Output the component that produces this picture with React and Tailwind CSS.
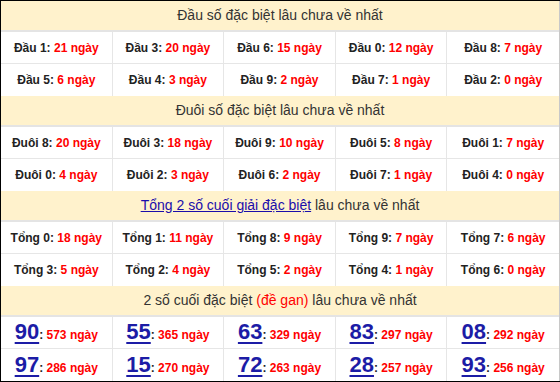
import React from "react";

const dau = [
	[["Đầu 1", 21], ["Đầu 3", 20], ["Đầu 6", 15], ["Đầu 0", 12], ["Đầu 8", 7]],
	[["Đầu 5", 6], ["Đầu 4", 3], ["Đầu 9", 2], ["Đầu 7", 1], ["Đầu 2", 0]],
];
const duoi = [
	[["Đuôi 8", 20], ["Đuôi 3", 18], ["Đuôi 9", 10], ["Đuôi 5", 8], ["Đuôi 1", 7]],
	[["Đuôi 0", 4], ["Đuôi 2", 3], ["Đuôi 6", 2], ["Đuôi 7", 1], ["Đuôi 4", 0]],
];
const tong = [
	[["Tổng 0", 18], ["Tổng 1", 11], ["Tổng 8", 9], ["Tổng 9", 7], ["Tổng 7", 6]],
	[["Tổng 3", 5], ["Tổng 2", 4], ["Tổng 5", 2], ["Tổng 4", 1], ["Tổng 6", 0]],
];
const gan = [
	[["90", 573], ["55", 365], ["63", 329], ["83", 297], ["08", 292]],
	[["97", 286], ["15", 270], ["72", 263], ["28", 257], ["93", 256]],
];

function Header({ children }) {
	return <div className="h-[31px] bg-[#fff2cc] border-b-2 border-[#e4e4e4] flex items-center justify-center text-[14px] text-[#333]">{children}</div>;
}

function Row({ cells, last, render }) {
	return (
		<div className={`grid grid-cols-5 ${last ? "h-[32px]" : "h-[32px] border-b border-[#e6e6e6]"}`}>
			{cells.map((c, i) => (
				<div key={i} className={`flex items-center justify-center ${i < 4 ? "border-r border-[#e6e6e6]" : ""}`}>
					{render(c)}
				</div>
			))}
		</div>
	);
}

const plain = ([label, n]) => (
	<span className="text-[12px] font-bold text-[#222]">
		{label}: <span className="text-[#ff0000]">{n} ngày</span>
	</span>
);

const big = ([num, n]) => (
	<span className="flex items-baseline text-[12px] font-bold text-[#222]">
		<span className="text-[22px] leading-none text-[#1c1ca6] underline decoration-2 underline-offset-[3px]">{num}</span>
		<span>:&nbsp;</span>
		<span className="text-[#ff0000]">{n} ngày</span>
	</span>
);

export default function App() {
	return (
		<div className="w-[560px] h-[382px] bg-white border-t border-l border-b border-black font-['Liberation_Sans',Arial,sans-serif]">
			<div className="border-r border-[#c8c8c8]">
				<Header>Đầu số đặc biệt lâu chưa về nhất</Header>
				<Row cells={dau[0]} render={plain} />
				<Row cells={dau[1]} render={plain} last />
				<Header>Đuôi số đặc biệt lâu chưa về nhất</Header>
				<Row cells={duoi[0]} render={plain} />
				<Row cells={duoi[1]} render={plain} last />
				<Header>
					<a href="#" className="text-[#1a0dab] underline">Tổng 2 số cuối giải đặc biệt</a>
					<span>&nbsp;lâu chưa về nhất</span>
				</Header>
				<Row cells={tong[0]} render={plain} />
				<Row cells={tong[1]} render={plain} last />
				<Header>
					2 số cuối đặc biệt&nbsp;<span className="text-[#ff0000]">(đề gan)</span>&nbsp;lâu chưa về nhất
				</Header>
				<Row cells={gan[0]} render={big} />
				<Row cells={gan[1]} render={big} last />
			</div>
		</div>
	);
}
